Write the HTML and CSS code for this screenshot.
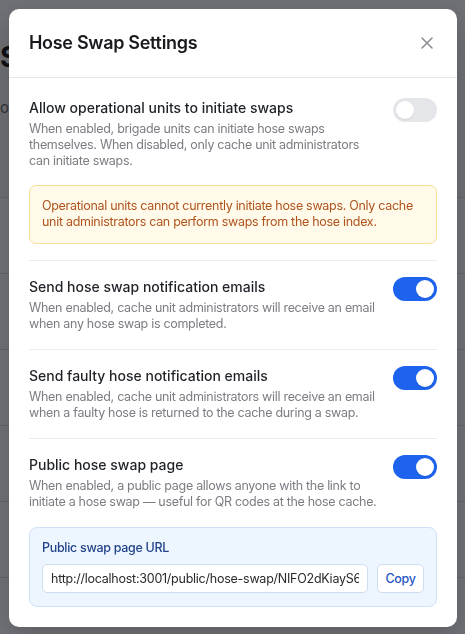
FILE: index.html
```html
<!DOCTYPE html>
<html>
<head>
  <meta charset="UTF-8">
  <title>Hose Swap Settings</title>
  <link rel="stylesheet" href="styles.css">
</head>
<body>
  <!-- Page behind the dialog -->
  <div class="page">
    <h1 class="page-title">Swaps</h1>
    <p class="page-sub">overview</p>
    <div class="rows">
      <div class="row"></div>
      <div class="row"></div>
      <div class="row"></div>
      <div class="row"></div>
      <div class="row"></div>
      <div class="row"></div>
      <div class="row row-text">
        <span class="cell">(District 07)</span>
        <span class="cell">Canvas</span>
      </div>
    </div>
  </div>

  <div class="backdrop"></div>

  <!-- Settings dialog -->
  <div class="modal">
    <div class="modal-header">
      <h2 class="modal-title">Hose Swap Settings</h2>
      <button class="close-btn" aria-label="Close">
        <svg width="12" height="12" viewBox="0 0 12 12">
          <path d="M1 1L11 11M11 1L1 11" stroke="#8a8a8e" stroke-width="1.5" stroke-linecap="round"/>
        </svg>
      </button>
    </div>

    <div class="modal-body">
      <div class="setting">
        <div class="setting-row">
          <div class="setting-text">
            <div class="setting-title">Allow operational units to initiate swaps</div>
            <div class="setting-desc">When enabled, brigade units can initiate hose swaps themselves. When disabled, only cache unit administrators can initiate swaps.</div>
          </div>
          <span class="toggle"></span>
        </div>
        <div class="alert">
          Operational units cannot currently initiate hose swaps. Only cache unit administrators can perform swaps from the hose index.
        </div>
      </div>

      <div class="setting">
        <div class="setting-row">
          <div class="setting-text">
            <div class="setting-title">Send hose swap notification emails</div>
            <div class="setting-desc">When enabled, cache unit administrators will receive an email when any hose swap is completed.</div>
          </div>
          <span class="toggle on"></span>
        </div>
      </div>

      <div class="setting">
        <div class="setting-row">
          <div class="setting-text">
            <div class="setting-title">Send faulty hose notification emails</div>
            <div class="setting-desc">When enabled, cache unit administrators will receive an email when a faulty hose is returned to the cache during a swap.</div>
          </div>
          <span class="toggle on"></span>
        </div>
      </div>

      <div class="setting">
        <div class="setting-row">
          <div class="setting-text">
            <div class="setting-title">Public hose swap page</div>
            <div class="setting-desc">When enabled, a public page allows anyone with the link to initiate a hose swap — useful for QR codes at the hose cache.</div>
          </div>
          <span class="toggle on"></span>
        </div>
        <div class="url-box">
          <div class="url-label">Public swap page URL</div>
          <div class="url-row">
            <input class="url-input" type="text" readonly value="http://localhost:3001/public/hose-swap/NIFO2dKiayS6I8xQ">
            <button class="copy-btn">Copy</button>
          </div>
        </div>
      </div>
    </div>
  </div>
</body>
</html>
```

FILE: styles.css
```css
body {
  font-family: Inter, "Noto Sans", sans-serif;
  margin: 0;
  padding: 0;
  background-color: #f5f5f6;
  color: #1f2328;
}

/* background page */
.page {
  padding-top: 40px;
}

.page-title {
  margin: 0;
  font-size: 28px;
  line-height: 34px;
  font-weight: 700;
  color: #111;
}

.page-sub {
  margin: 24px 0 0;
  font-size: 15px;
  color: #666;
}

.rows {
  margin-top: 80px;
  background-color: #fbfbfb;
}

.row {
  height: 75px;
  border-top: 1px solid #dcdcdf;
}

.row-text {
  display: flex;
  padding-top: 40px;
  font-size: 15px;
  color: #222;
}

.row-text .cell:first-child {
  padding-left: 23px;
  width: 227px;
}

/* overlay */
.backdrop {
  position: fixed;
  inset: 0;
  background-color: rgba(15, 18, 25, 0.58);
}

.modal {
  position: fixed;
  top: 9px;
  left: 9px;
  width: 448px;
  background-color: white;
  border-radius: 10px;
  box-shadow: 0 10px 30px rgba(0, 0, 0, 0.2);
}

.modal-header {
  display: flex;
  align-items: center;
  justify-content: space-between;
  padding: 20px;
  border-bottom: 1px solid #e6e6e8;
}

.modal-title {
  margin: 0;
  font-size: 18px;
  line-height: 28px;
  font-weight: 600;
  letter-spacing: -0.3px;
  color: #1a1a1e;
}

.close-btn {
  width: 20px;
  height: 20px;
  padding: 0;
  border: none;
  background: none;
  display: flex;
  align-items: center;
  justify-content: center;
  cursor: pointer;
}

.modal-body {
  padding: 20px;
}

.setting {
  padding: 16px 0 17px;
  border-top: 1px solid #ececee;
}

.setting:first-child {
  padding-top: 0;
  padding-bottom: 16px;
  border-top: none;
}

.setting:last-child {
  padding-bottom: 0;
}

.setting-row {
  display: flex;
  align-items: flex-start;
  gap: 12px;
}

.setting-text {
  flex: 1;
}

.setting-title {
  font-size: 14px;
  line-height: 20px;
  font-weight: 500;
  color: #1f2328;
}

.setting-desc {
  margin-top: 3px;
  font-size: 12.5px;
  line-height: 16px;
  letter-spacing: -0.3px;
  color: #7b7d83;
}

.toggle {
  flex-shrink: 0;
  position: relative;
  width: 44px;
  height: 24px;
  border-radius: 12px;
  background-color: #e5e6e9;
}

.toggle::after {
  content: "";
  position: absolute;
  top: 3px;
  left: 3px;
  width: 18px;
  height: 18px;
  border-radius: 50%;
  background-color: white;
  box-shadow: 0 1px 2px rgba(0, 0, 0, 0.08);
}

.toggle.on {
  background-color: #1d63ed;
}

.toggle.on::after {
  left: 23px;
}

.alert {
  margin-top: 16px;
  padding: 12px 12px 13px;
  font-size: 12.5px;
  line-height: 16px;
  letter-spacing: -0.3px;
  color: #b0531c;
  background-color: #fffaea;
  border: 1px solid #f7df95;
  border-radius: 7px;
}

.url-box {
  margin-top: 17px;
  padding: 12px 12px 13px;
  background-color: #edf5fe;
  border: 1px solid #cfe1f6;
  border-radius: 8px;
}

.url-label {
  font-size: 12.5px;
  line-height: 16px;
  font-weight: 500;
  letter-spacing: -0.3px;
  color: #23448a;
}

.url-row {
  display: flex;
  gap: 9px;
  margin-top: 8px;
}

.url-input {
  flex: 1;
  min-width: 0;
  height: 29px;
  box-sizing: border-box;
  padding: 0 8px;
  font-family: Inter, "Noto Sans", sans-serif;
  font-size: 12.5px;
  letter-spacing: -0.25px;
  color: #2a2a2e;
  background-color: white;
  border: 1px solid #cddcee;
  border-radius: 5px;
  outline: none;
}

.copy-btn {
  flex-shrink: 0;
  width: 47px;
  height: 29px;
  padding: 0;
  font-family: Inter, "Noto Sans", sans-serif;
  font-size: 12.5px;
  font-weight: 500;
  letter-spacing: -0.3px;
  color: #1f55c4;
  background-color: white;
  border: 1px solid #cddcee;
  border-radius: 5px;
  cursor: pointer;
}
```
